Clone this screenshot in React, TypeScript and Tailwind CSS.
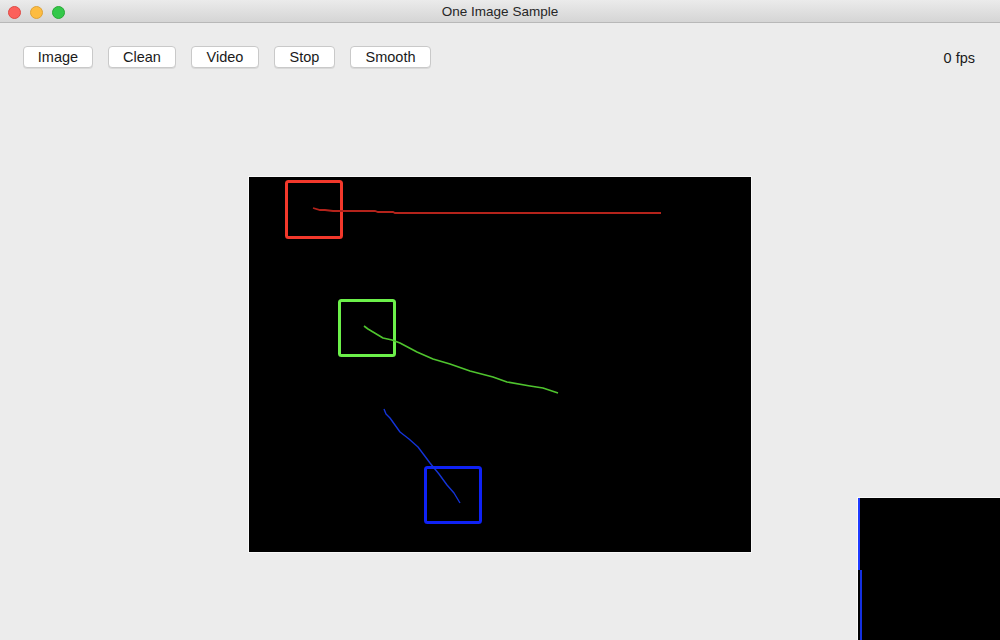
import React from "react";

const font = { fontFamily: '"Liberation Sans", Arial, sans-serif' };

const buttons: { label: string; w: string }[] = [
  { label: "Image", w: "w-[70px]" },
  { label: "Clean", w: "w-[68px]" },
  { label: "Video", w: "w-[68px]" },
  { label: "Stop", w: "w-[61px]" },
  { label: "Smooth", w: "w-[81px]" },
];

const toPts = (p: number[][]) => p.map((q) => q.join(",")).join(" ");

const red = [[64,31],[71,33],[76,33],[84,34],[126,34],[129,35],[144,35],[146,36],[412,36]];
const green = [[115,149],[119,152],[124,155],[129,158],[134,161],[143,163],[151,166],[168,175],[184,182],[201,187],[221,194],[244,200],[258,205],[281,209],[294,211],[309,216]];
const blue = [[135,232],[137,237],[141,241],[151,255],[160,262],[169,270],[175,278],[181,286],[190,297],[198,308],[205,316],[211,326]];

export default function App() {
  return (
    <div className="relative w-[1000px] h-[640px] overflow-hidden bg-[#ececec]" style={font}>
      {/* Title bar */}
      <div className="relative h-[23px] flex items-center justify-center pt-[2px] bg-gradient-to-b from-[#ebebeb] to-[#d5d5d5] border-b border-[#b8b8b8]">
        <div className="absolute left-[8px] top-[6px] flex gap-[9px]">
          <div className="w-[13px] h-[13px] rounded-full bg-[#fc605b] border border-[#de4a44]" />
          <div className="w-[13px] h-[13px] rounded-full bg-[#fdbc40] border border-[#dea236]" />
          <div className="w-[13px] h-[13px] rounded-full bg-[#34c84a] border border-[#27aa35]" />
        </div>
        <span className="text-[13.5px] text-[#262626]">One Image Sample</span>
      </div>

      {/* Toolbar */}
      <div className="flex items-center justify-between h-[22px] mt-[23px] pl-[23px] pr-[25px]">
        <div className="flex gap-[15px]">
          {buttons.map((b) => (
            <div
              key={b.label}
              className={`${b.w} h-[22px] flex items-center justify-center pt-[2px] bg-white border border-[#c9c9c9] rounded-[4px] shadow-[0_1px_0_rgba(0,0,0,0.08)] text-[14.5px] text-[#1a1a1a]`}
            >
              {b.label}
            </div>
          ))}
        </div>
        <span className="text-[14.5px] text-[#1a1a1a] pt-[3px]">0 fps</span>
      </div>

      {/* Canvas */}
      <div className="flex justify-center pt-[108px]">
        <div className="border border-[#f8f8f8]">
          <svg width="502" height="375" className="block bg-black">
            <rect x="37.5" y="4.5" width="55" height="56" rx="2" fill="none" stroke="#f2382b" strokeWidth="3" />
            <polyline points={toPts(red)} fill="none" stroke="#b4231b" strokeWidth="1.8" />
            <rect x="90.5" y="123.5" width="55" height="55" rx="2" fill="none" stroke="#6cf04a" strokeWidth="3" />
            <polyline points={toPts(green)} fill="none" stroke="#4fc42e" strokeWidth="1.6" strokeLinejoin="round" />
            <rect x="176.5" y="290.5" width="55" height="55" rx="2" fill="none" stroke="#0f22f5" strokeWidth="3" />
            <polyline points={toPts(blue)} fill="none" stroke="#1434d8" strokeWidth="1.4" strokeLinejoin="round" />
          </svg>
        </div>
      </div>

      {/* Stray overlay preview */}
      <div className="absolute left-[857px] top-[497px] w-[143px] h-[143px] border-l border-t border-[#fafafa] bg-black">
        <div className="absolute left-0 top-0 w-[2px] h-[72px] bg-[#1f3bff]" />
        <div className="absolute left-[2px] top-[72px] w-[2px] h-[71px] bg-[#1430e0]" />
      </div>
    </div>
  );
}
